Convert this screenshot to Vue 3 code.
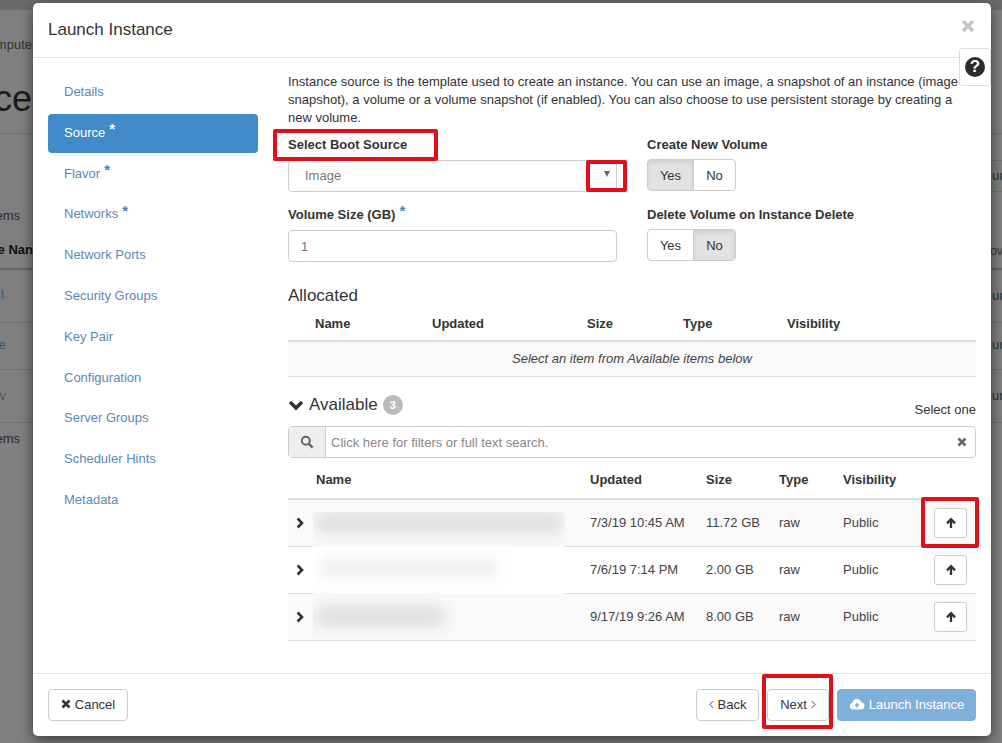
<script setup>
const nav = [
  { label: 'Details' },
  { label: 'Source', star: true, active: true },
  { label: 'Flavor', star: true },
  { label: 'Networks', star: true },
  { label: 'Network Ports' },
  { label: 'Security Groups' },
  { label: 'Key Pair' },
  { label: 'Configuration' },
  { label: 'Server Groups' },
  { label: 'Scheduler Hints' },
  { label: 'Metadata' }
]
const rows = [
  { updated: '7/3/19 10:45 AM', size: '11.72 GB' },
  { updated: '7/6/19 7:14 PM', size: '2.00 GB' },
  { updated: '9/17/19 9:26 AM', size: '8.00 GB' }
]
const peeks = [
  { text: 'mpute', cls: 'p-crumb' },
  { text: 'ce', cls: 'p-title' },
  { text: 'ems', cls: 'p-items1' },
  { text: 'e Nan', cls: 'p-head' },
  { text: 'l', cls: 'p-l1' },
  { text: 'e', cls: 'p-l2' },
  { text: 'v', cls: 'p-l3' },
  { text: 'ems', cls: 'p-items2' },
  { text: 'un', cls: 'p-r1' },
  { text: 'ow', cls: 'p-r2' },
  { text: 'un', cls: 'p-r3' },
  { text: 'un', cls: 'p-r4' },
  { text: 'un', cls: 'p-r5' }
]
const lines = [
  { cls: 'l-t' }, { cls: 'l-a' }, { cls: 'l-b' }, { cls: 'l-c' }, { cls: 'l-d' }, { cls: 'l-e' },
  { cls: 'r-t' }, { cls: 'r-a' }, { cls: 'r-b' }, { cls: 'r-c' }, { cls: 'r-d' }, { cls: 'r-e' }, { cls: 'r-g' }, { cls: 'r-f' }
]
</script>

<template>
  <div class="page">
    <div class="backdrop">
      <div class="topband"></div>
      <span v-for="p in peeks" :key="p.cls" class="peek" :class="p.cls">{{ p.text }}</span>
      <i v-for="l in lines" :key="l.cls" class="bline" :class="l.cls"></i>
    </div>

    <section class="modal">
      <header class="m-head">
        <h4>Launch Instance</h4>
        <svg class="close" viewBox="0 0 14 14" width="14" height="14"><path d="M2 2 12 12M12 2 2 12" stroke="#c6c6c6" stroke-width="3.6" fill="none" /></svg>
      </header>
      <div class="help"><span class="help-dot">?</span></div>

      <div class="m-body">
        <nav class="side">
          <a v-for="n in nav" :key="n.label" class="side-item" :class="{ active: n.active }">
            {{ n.label }}<span v-if="n.star" class="star">*</span>
          </a>
        </nav>

        <main class="content">
          <p class="intro">Instance source is the template used to create an instance. You can use an image, a snapshot of an instance (image snapshot), a volume or a volume snapshot (if enabled). You can also choose to use persistent storage by creating a new volume.</p>

          <div class="form">
            <div class="fcol">
              <div class="field">
                <label>Select Boot Source</label>
                <div class="select"><span>Image</span><i class="caret"></i></div>
              </div>
              <div class="field f2">
                <label>Volume Size (GB)<span class="star dark">*</span></label>
                <div class="input">1</div>
              </div>
            </div>
            <div class="fcol right">
              <div class="field">
                <label>Create New Volume</label>
                <div class="toggle"><span class="on">Yes</span><span>No</span></div>
              </div>
              <div class="field f2">
                <label>Delete Volume on Instance Delete</label>
                <div class="toggle"><span>Yes</span><span class="on">No</span></div>
              </div>
            </div>
          </div>

          <h3 class="allocated">Allocated</h3>
          <div class="a-head">
            <b>Name</b><b>Updated</b><b>Size</b><b>Type</b><b>Visibility</b>
          </div>
          <div class="a-empty">Select an item from Available items below</div>

          <div class="avail-head">
            <h3>
              <svg viewBox="0 0 16 11" width="16" height="11"><path d="M2 2 8 8 14 2" stroke="#333" stroke-width="3.4" fill="none" /></svg>
              Available <span class="badge">3</span>
            </h3>
            <span class="select-one">Select one</span>
          </div>

          <div class="search">
            <span class="addon">
              <svg viewBox="0 0 14 14" width="14" height="14"><circle cx="5.8" cy="5.8" r="4" stroke="#666" stroke-width="2" fill="none" /><path d="M8.8 8.8 12.6 12.6" stroke="#666" stroke-width="2.4" /></svg>
            </span>
            <span class="ph">Click here for filters or full text search.</span>
            <svg class="clear" viewBox="0 0 10 10" width="10" height="10"><path d="M1.5 1.5 8.5 8.5M8.5 1.5 1.5 8.5" stroke="#666" stroke-width="2.6" fill="none" /></svg>
          </div>

          <div class="t-head t-grid">
            <span></span><b>Name</b><b>Updated</b><b>Size</b><b>Type</b><b>Visibility</b><span></span>
          </div>
          <div class="t-body">
            <div v-for="r in rows" :key="r.updated" class="t-row t-grid">
              <svg viewBox="0 0 8 12" width="8" height="12"><path d="M1.6 1.5 6 6 1.6 10.5" stroke="#333" stroke-width="2.6" fill="none" /></svg>
              <span></span>
              <span>{{ r.updated }}</span>
              <span>{{ r.size }}</span>
              <span>raw</span>
              <span>Public</span>
              <span class="act">
                <button class="up">
                  <svg viewBox="0 0 12 12" width="12" height="12"><path d="M6 11V3M2 6.4 6 2.2 10 6.4" stroke="#333" stroke-width="2.3" fill="none" /></svg>
                </button>
              </span>
            </div>
            <div class="redact">
              <i class="smear s1"></i><i class="smear s2"></i><i class="smear s3"></i>
            </div>
          </div>
        </main>
      </div>

      <footer class="m-foot">
        <button class="btn">
          <svg viewBox="0 0 10 10" width="10" height="10"><path d="M1.5 1.5 8.5 8.5M8.5 1.5 1.5 8.5" stroke="#333" stroke-width="2.6" fill="none" /></svg>
          Cancel
        </button>
        <div class="foot-right">
          <button class="btn nav-btn back">
            <svg viewBox="0 0 6 10" width="5" height="9"><path d="M5 1 1 5 5 9" stroke="#333" stroke-width="1.1" fill="none" /></svg>
            Back
          </button>
          <button class="btn nav-btn next">
            Next
            <svg viewBox="0 0 6 10" width="5" height="9"><path d="M1 1 5 5 1 9" stroke="#333" stroke-width="1.1" fill="none" /></svg>
          </button>
          <button class="btn launch">
            <svg viewBox="0 0 16 12" width="16" height="12"><path d="M4 11.5A3.4 3.4 0 0 1 3.4 4.8 4.6 4.6 0 0 1 12.2 4 3.8 3.8 0 0 1 12.4 11.5Z" fill="#fff" /><path d="M8 10V6.4M6.2 7.8 8 5.8 9.8 7.8" stroke="#7fb0dc" stroke-width="1.3" fill="none" /></svg>
            Launch Instance
          </button>
        </div>
      </footer>

      <i class="mark m1"></i><i class="mark m2"></i><i class="mark m3"></i><i class="mark m4"></i>
    </section>
  </div>
</template>

<style>
html, body { margin: 0; padding: 0; }
</style>

<style scoped>
.page {
  position: relative;
  width: 1002px;
  height: 743px;
  overflow: hidden;
  background: #7f7f7f;
  font-family: "Liberation Sans", Arial, sans-serif;
  font-size: 13px;
  color: #333;
}
.backdrop { position: absolute; inset: 0; }
.topband { height: 9px; background: #6a6a6a; }
.peek { position: absolute; white-space: nowrap; color: #2a2a2a; font-size: 13px; line-height: 16px; }
.p-crumb { right: 970px; top: 37px; color: #333; }
.p-title { right: 970px; top: 78px; font-size: 36px; line-height: 42px; color: #1a1a1a; }
.p-items1 { right: 982px; top: 208px; }
.p-head { right: 969px; top: 242px; font-weight: 700; color: #111; }
.p-l1 { right: 998px; top: 287px; color: #34587a; }
.p-l2 { right: 996px; top: 337px; color: #2a5a88; }
.p-l3 { right: 996px; top: 388px; color: #555; }
.p-items2 { right: 982px; top: 431px; }
.p-r1 { left: 992px; top: 168px; color: #333; }
.p-r2 { left: 990px; top: 243px; color: #333; }
.p-r3 { left: 992px; top: 288px; color: #333; }
.p-r4 { left: 992px; top: 337px; color: #333; }
.p-r5 { left: 992px; top: 388px; color: #333; }
.bline { position: absolute; height: 1px; background: #6f6f6f; width: 40px; }
.l-t { left: 0; top: 9px; }
.l-a { left: 0; top: 133px; }
.l-b { left: 0; top: 268px; height: 2px; background: #666; }
.l-c { left: 0; top: 322px; }
.l-d { left: 0; top: 369px; }
.l-e { left: 0; top: 422px; }
.r-t { left: 985px; top: 9px; }
.r-a { left: 985px; top: 133px; }
.r-b { left: 985px; top: 160px; }
.r-c { left: 985px; top: 191px; }
.r-d { left: 985px; top: 268px; height: 2px; background: #666; }
.r-e { left: 985px; top: 322px; }
.r-g { left: 985px; top: 369px; }
.r-f { left: 985px; top: 422px; }

.modal {
  position: absolute;
  left: 33px;
  top: 3px;
  width: 958px;
  height: 733px;
  display: flex;
  flex-direction: column;
  background: #fff;
  border-radius: 5px;
  box-shadow: 0 4px 14px rgba(0, 0, 0, .55);
}
.m-head {
  height: 55px;
  flex: none;
  box-sizing: border-box;
  border-bottom: 1px solid #e5e5e5;
  padding: 0 15px;
  display: flex;
  align-items: center;
  justify-content: space-between;
}
.m-head h4 { margin: 0; font-size: 17px; font-weight: 400; color: #333; }
.close { margin-right: 1px; margin-top: -9px; }
.help {
  position: absolute;
  right: 0;
  top: 45px;
  width: 32px;
  height: 38px;
  box-sizing: border-box;
  background: #fff;
  border: 1px solid #ddd;
  border-radius: 3px;
  display: flex;
  align-items: center;
  justify-content: center;
}
.help-dot {
  width: 20px;
  height: 20px;
  border-radius: 50%;
  background: #2b2b2b;
  color: #fff;
  font-weight: 700;
  font-size: 17px;
  line-height: 20px;
  text-align: center;
}
.m-body { flex: 1; display: flex; min-height: 0; }
.side {
  width: 210px;
  flex: none;
  margin-left: 15px;
  padding-top: 15px;
  display: flex;
  flex-direction: column;
  gap: 1.8px;
}
.side-item {
  height: 39px;
  flex: none;
  box-sizing: border-box;
  padding-left: 16px;
  padding-bottom: 2px;
  border-radius: 4px;
  display: flex;
  align-items: center;
  color: #5a89b4;
}
.side-item.active { background: #428bca; color: #fff; }
.star {
  font-size: 15px;
  font-weight: 700;
  line-height: 1;
  margin-left: 4px;
  margin-top: -7px;
  color: #4a84bb;
}
.active .star { color: #fff; }
.star.dark { display: inline-block; margin-top: 0; position: relative; top: -3px; }

.content { width: 688px; margin-left: 30px; flex: none; padding-top: 15px; }
.intro { margin: 0; line-height: 18px; color: #333; }
.form { display: flex; gap: 30px; margin-top: 9px; }
.fcol { width: 329px; }
.fcol.right { width: auto; flex: 1; }
.field label { display: block; font-weight: 700; line-height: 18px; height: 18px; margin-bottom: 6px; color: #333; }
.f2 { margin-top: 14px; }
.right .f2 { margin-top: 15px; }
.select, .input {
  box-sizing: border-box;
  width: 329px;
  border: 1px solid #ccc;
  border-radius: 4px;
  display: flex;
  align-items: center;
  color: #777;
}
.select { height: 32px; padding-left: 16px; padding-bottom: 2px; justify-content: space-between; }
.input { height: 32px; padding-left: 12px; }
.caret {
  width: 0;
  height: 0;
  border-left: 3.5px solid transparent;
  border-right: 3.5px solid transparent;
  border-top: 6px solid #666;
  margin-right: 6px;
  margin-top: -3px;
}
.toggle {
  display: inline-flex;
  height: 32px;
  margin-top: -1px;
  box-sizing: border-box;
  border: 1px solid #ccc;
  border-radius: 4px;
  overflow: hidden;
}
.toggle span {
  width: 45px;
  display: flex;
  align-items: center;
  justify-content: center;
  color: #333;
}
.toggle span + span { border-left: 1px solid #ccc; width: 41px; }
.toggle .on { background: #e2e2e2; box-shadow: inset 0 2px 4px rgba(0, 0, 0, .1); }

.allocated { margin: 24px 0 0; font-size: 17px; font-weight: 400; line-height: 20px; color: #333; }
.a-head {
  height: 36px;
  box-sizing: border-box;
  border-bottom: 2px solid #ddd;
  display: grid;
  grid-template-columns: 117px 155px 96px 104px 1fr;
  padding-left: 27px;
  align-items: center;
}
.a-empty {
  height: 35px;
  box-sizing: border-box;
  padding-bottom: 2px;
  background: #f9f9f9;
  border-bottom: 1px solid #ddd;
  display: flex;
  align-items: center;
  justify-content: center;
  font-style: italic;
  color: #444;
}
.avail-head {
  display: flex;
  justify-content: space-between;
  align-items: flex-end;
  height: 41px;
}
.avail-head h3 {
  margin: 0;
  font-size: 17px;
  font-weight: 400;
  line-height: 20px;
  display: flex;
  align-items: center;
  gap: 5px;
  color: #333;
  position: relative;
  top: -3px;
}
.badge {
  width: 20px;
  height: 20px;
  border-radius: 50%;
  background: #bbb;
  color: #fff;
  font-size: 11px;
  font-weight: 700;
  line-height: 20px;
  text-align: center;
}
.select-one { line-height: 16px; }
.search {
  margin-top: 8px;
  height: 32px;
  box-sizing: border-box;
  border: 1px solid #ccc;
  border-radius: 4px;
  display: flex;
  align-items: center;
}
.addon {
  width: 37px;
  height: 100%;
  box-sizing: border-box;
  flex: none;
  background: #eee;
  border-right: 1px solid #ccc;
  display: flex;
  align-items: center;
  justify-content: center;
}
.ph { margin-left: 5px; color: #888; flex: 1; }
.clear { margin-right: 8px; }
.t-grid {
  display: grid;
  grid-template-columns: 28px 274px 116px 73px 64px 91px 42px;
  align-items: center;
}
.t-head { height: 42px; box-sizing: border-box; border-bottom: 2px solid #ddd; padding-top: 3px; }
.t-body { position: relative; }
.t-row { height: 47px; box-sizing: border-box; border-bottom: 1px solid #ddd; color: #444; }
.t-row > span:not(.act) { padding-bottom: 2px; }
.t-row:nth-child(odd) { background: #f9f9f9; }
.t-row svg { margin-left: 8px; }
.t-row .up svg { margin: 0; }
.act { display: flex; }
.up {
  width: 33px;
  height: 30px;
  box-sizing: border-box;
  padding: 0;
  background: #fff;
  border: 1px solid #ccc;
  border-radius: 3px;
  display: flex;
  align-items: center;
  justify-content: center;
}
.redact {
  position: absolute;
  left: 25px;
  top: 12px;
  width: 252px;
  height: 124px;
  background: linear-gradient(#f9f9f9 0, #f9f9f9 34px, #fff 35px, #fff 81px, #f9f9f9 82px);
  overflow: hidden;
}
.smear { position: absolute; display: block; background: #c8c8c8; filter: blur(8px); border-radius: 6px; }
.s1 { left: 2px; top: 1px; width: 248px; height: 20px; opacity: .6; }
.s2 { left: 8px; top: 47px; width: 176px; height: 18px; opacity: .35; }
.s3 { left: 2px; top: 95px; width: 130px; height: 19px; opacity: .6; }

.m-foot {
  height: 63px;
  flex: none;
  box-sizing: border-box;
  border-top: 1px solid #e5e5e5;
  padding: 15px;
  display: flex;
  justify-content: space-between;
  align-items: flex-start;
}
.foot-right { display: flex; gap: 8px; }
.btn {
  height: 32px;
  box-sizing: border-box;
  border: 1px solid #ccc;
  border-radius: 4px;
  background: #fff;
  padding: 0 0 2px;
  width: 80px;
  font: inherit;
  color: #333;
  display: flex;
  align-items: center;
  justify-content: center;
  gap: 4px;
}
.nav-btn.back { width: 63px; }
.nav-btn.next { width: 62px; }
.launch { width: 139px; background: #7fb0dc; border-color: #7fb0dc; color: #fff; }

.mark {
  position: absolute;
  display: block;
  box-sizing: border-box;
  border: 4px solid #e0101a;
  border-radius: 2px;
  pointer-events: none;
}
.m1 { left: 240px; top: 126px; width: 165px; height: 32px; }
.m2 { left: 553px; top: 157px; width: 41px; height: 32px; }
.m3 { left: 888px; top: 494px; width: 58px; height: 51px; }
.m4 { left: 729px; top: 671px; width: 71px; height: 55px; }
</style>
